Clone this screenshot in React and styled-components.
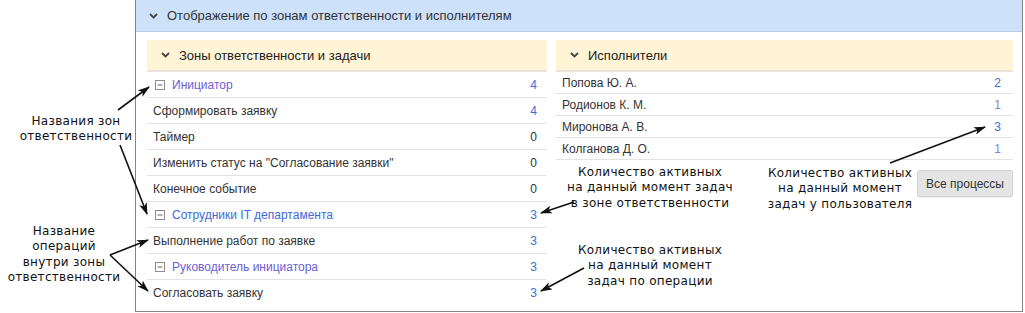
import React from 'react';
import styled, { createGlobalStyle } from 'styled-components';

const GlobalStyle = createGlobalStyle`
  html, body {
    margin: 0;
    padding: 0;
    background: #fff;
  }
  body {
    font-family: "Liberation Sans", Arial, sans-serif;
    color: #333;
  }
`;

const Page = styled.div`
  position: relative;
  width: 1025px;
  height: 313px;
  padding-left: 135px;
  box-sizing: border-box;
  overflow: hidden;
`;

const Panel = styled.div`
  width: 888px;
  height: 312px;
  box-sizing: border-box;
  border: 1px solid #858585;
  border-top: none;
  display: flex;
  flex-direction: column;
`;

const PanelHeader = styled.div`
  height: 31px;
  background: #cde1fb;
  border-bottom: 1px solid #b9cde6;
  display: flex;
  align-items: center;
  gap: 9px;
  padding-left: 13px;
  font-size: 13px;
  color: #333;
`;

const Columns = styled.div`
  display: flex;
  gap: 9px;
  padding: 8px 9px 0 11px;
  align-items: flex-start;
`;

const Column = styled.div`
  width: ${p => p.$width}px;
  display: flex;
  flex-direction: column;
`;

const SectionHeader = styled.div`
  height: 30px;
  background: #fff4d6;
  border-bottom: 2px solid #e9e5dc;
  display: flex;
  align-items: center;
  gap: 9px;
  padding-left: 14px;
  font-size: 13px;
  color: #222;
`;

const Row = styled.div`
  height: ${p => p.$h}px;
  display: flex;
  align-items: center;
  justify-content: space-between;
  padding: 0 ${p => p.$pr}px 0 ${p => (p.$zone ? 8 : 6)}px;
  border-bottom: 1px solid #e3e3e3;
  font-size: 12px;
  color: #333;
  &:last-child {
    border-bottom-color: transparent;
  }
`;

const Label = styled.span`
  display: flex;
  align-items: center;
  gap: 7px;
  color: ${p => p.$color || '#333'};
`;

const Count = styled.span`
  color: ${p => p.$color || '#333'};
`;

const ButtonBar = styled.div`
  display: flex;
  justify-content: flex-end;
  margin-top: 10px;
`;

const Button = styled.button`
  width: 96px;
  height: 27px;
  background: #e4e4e4;
  border: 1px solid #d2d2d2;
  border-radius: 3px;
  font-family: "Liberation Sans", Arial, sans-serif;
  font-size: 12px;
  color: #333;
  padding: 0;
  box-shadow: 0 1px 1px rgba(0, 0, 0, 0.08);
`;

const Note = styled.div`
  position: absolute;
  left: ${p => p.$x - 100}px;
  top: ${p => p.$y}px;
  width: 200px;
  text-align: center;
  font-family: "DejaVu Sans", Verdana, sans-serif;
  font-size: 12px;
  line-height: 15.3px;
  letter-spacing: 0.3px;
  color: #111;
  white-space: pre-line;
`;

const Overlay = styled.svg`
  position: absolute;
  left: 0;
  top: 0;
  pointer-events: none;
`;

const Chevron = () => (
  <svg width="9" height="6" viewBox="0 0 9 6">
    <polyline points="1,1 4.5,4.5 8,1" fill="none" stroke="#444" strokeWidth="1.8" />
  </svg>
);

const TreeToggle = () => (
  <svg width="10" height="10" viewBox="0 0 10 10">
    <rect x="0.5" y="0.5" width="9" height="9" fill="none" stroke="#8c8c8c" />
    <line x1="2.5" y1="5" x2="7.5" y2="5" stroke="#6b6b6b" />
  </svg>
);

const BLUE = '#3d6bd8';
const PURPLE = '#6b60d6';
const PURPLE_NUM = '#8a80d0';

const tasks = [
  { name: 'Инициатор', zone: true, color: PURPLE, count: 4, countColor: BLUE },
  { name: 'Сформировать заявку', count: 4, countColor: BLUE },
  { name: 'Таймер', count: 0 },
  { name: 'Изменить статус на "Согласование заявки"', count: 0 },
  { name: 'Конечное событие', count: 0 },
  { name: 'Сотрудники IT департамента', zone: true, color: BLUE, count: 3, countColor: BLUE },
  { name: 'Выполнение работ по заявке', count: 3, countColor: BLUE },
  { name: 'Руководитель инициатора', zone: true, color: PURPLE, count: 3, countColor: BLUE },
  { name: 'Согласовать заявку', count: 3, countColor: BLUE },
];

const users = [
  { name: 'Попова Ю. А.', count: 2, color: BLUE },
  { name: 'Родионов К. М.', count: 1, color: PURPLE_NUM },
  { name: 'Миронова А. В.', count: 3, color: BLUE },
  { name: 'Колганова Д. О.', count: 1, color: PURPLE_NUM },
];

const arrows = [
  [118, 110, 149, 87],
  [120, 145, 147, 214],
  [110, 255, 148, 240],
  [110, 255, 148, 291],
  [574, 202, 541, 213],
  [584, 268, 541, 291],
  [890, 163, 985, 127],
];

const App = () => (
  <Page>
    <GlobalStyle />
    <Panel>
      <PanelHeader>
        <Chevron />
        Отображение по зонам ответственности и исполнителям
      </PanelHeader>
      <Columns>
        <Column $width={400}>
          <SectionHeader>
            <Chevron />
            Зоны ответственности и задачи
          </SectionHeader>
          {tasks.map(t => (
            <Row key={t.name} $h={25} $pr={10} $zone={t.zone}>
              <Label $color={t.color}>
                {t.zone && <TreeToggle />}
                {t.name}
              </Label>
              <Count $color={t.countColor}>{t.count}</Count>
            </Row>
          ))}
        </Column>
        <Column $width={457}>
          <SectionHeader>
            <Chevron />
            Исполнители
          </SectionHeader>
          {users.map(u => (
            <Row key={u.name} $h={21} $pr={12}>
              <Label>{u.name}</Label>
              <Count $color={u.color}>{u.count}</Count>
            </Row>
          ))}
          <ButtonBar>
            <Button>Все процессы</Button>
          </ButtonBar>
        </Column>
      </Columns>
    </Panel>

    <Note $x={76} $y={114}>{'Названия зон\nответственности'}</Note>
    <Note $x={64} $y={224}>{'Название\nопераций\nвнутри зоны\nответственности'}</Note>
    <Note $x={650} $y={165}>{'Количество активных\nна данный момент задач\nв зоне ответственности'}</Note>
    <Note $x={650} $y={243}>{'Количество активных\nна данный момент\nзадач по операции'}</Note>
    <Note $x={840} $y={166}>{'Количество активных\nна данный момент\nзадач у пользователя'}</Note>

    <Overlay width="1025" height="313" viewBox="0 0 1025 313">
      <defs>
        <marker id="head" viewBox="0 0 12 8" refX="11" refY="4" markerWidth="12" markerHeight="8" markerUnits="userSpaceOnUse" orient="auto">
          <path d="M0,0 L12,4 L0,8 L3,4 Z" fill="#111" />
        </marker>
      </defs>
      {arrows.map(([x1, y1, x2, y2], i) => (
        <line key={i} x1={x1} y1={y1} x2={x2} y2={y2} stroke="#111" strokeWidth="1.6" markerEnd="url(#head)" />
      ))}
    </Overlay>
  </Page>
);

export default App;
